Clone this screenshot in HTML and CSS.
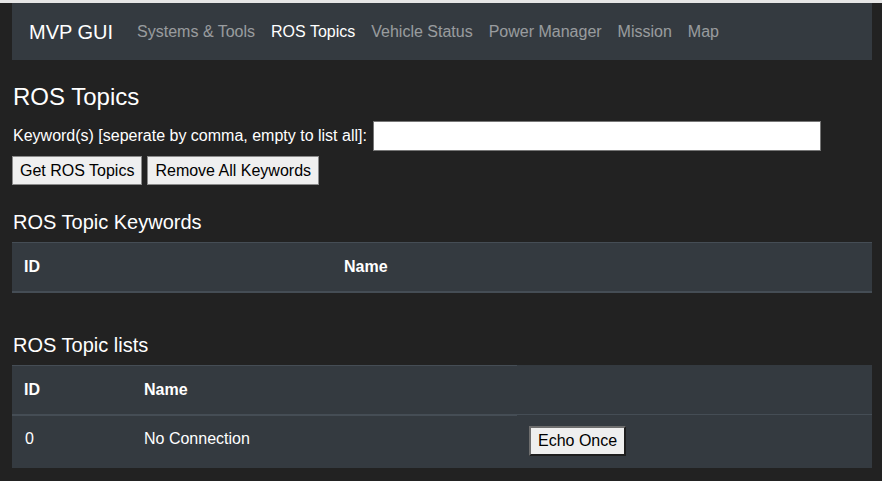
FILE: index.html
```html
<!DOCTYPE html>
<html lang="en">
<head>
<meta charset="utf-8">
<title>MVP GUI - ROS Topics</title>
<link rel="stylesheet" href="styles.css">
</head>
<body>
<div class="topstrip"></div>
<div class="page">
  <nav class="navbar">
    <span class="brand">MVP GUI</span>
    <a class="nav-link">Systems &amp; Tools</a>
    <a class="nav-link active">ROS Topics</a>
    <a class="nav-link">Vehicle Status</a>
    <a class="nav-link">Power Manager</a>
    <a class="nav-link">Mission</a>
    <a class="nav-link">Map</a>
  </nav>

  <h2 class="title">ROS Topics</h2>
  <div class="keyword-row">
    <label class="keyword-label" for="kw">Keyword(s) [seperate by comma, empty to list all]:</label>
    <input class="keyword-input" id="kw" type="text">
  </div>
  <div class="button-row">
    <button class="btn">Get ROS Topics</button>
    <button class="btn">Remove All Keywords</button>
  </div>

  <h3 class="subtitle first">ROS Topic Keywords</h3>
  <table class="table">
    <colgroup><col class="c-kid"><col class="c-kname"></colgroup>
    <thead>
      <tr><th>ID</th><th>Name</th></tr>
    </thead>
    <tbody></tbody>
  </table>

  <h3 class="subtitle second">ROS Topic lists</h3>
  <table class="table">
    <colgroup><col class="c-id"><col class="c-name"><col class="c-act"></colgroup>
    <thead>
      <tr><th>ID</th><th>Name</th></tr>
    </thead>
    <tbody>
      <tr><td class="cell-id">0</td><td>No Connection</td><td><button class="btn echo">Echo Once</button></td></tr>
    </tbody>
  </table>
</div>
</body>
</html>
```

FILE: styles.css
```css
html, body {
  margin: 0;
  padding: 0;
}
body {
  background: #222222;
  color: #ffffff;
  font-family: "Liberation Sans", Arial, sans-serif;
  font-size: 16px;
  line-height: 1.5;
}
.topstrip {
  height: 3px;
  background: #e6e6e6;
}
.page {
  margin-left: 12px;
  width: 860px;
}
.navbar {
  display: flex;
  align-items: center;
  height: 57px;
  box-sizing: border-box;
  padding: 0 16px 0 17px;
  background: #343a40;
}
.brand {
  font-size: 20px;
  line-height: 30px;
  color: #ffffff;
  margin-right: 16px;
}
.nav-link {
  padding: 0 8px;
  color: rgba(255, 255, 255, 0.5);
  line-height: 24px;
}
.nav-link.active {
  color: #ffffff;
}
.title {
  margin: 23px 0 9px 1px;
  font-size: 24px;
  font-weight: 400;
  line-height: 1.2;
}
.keyword-row {
  display: flex;
  align-items: center;
  gap: 6px;
  height: 30px;
  padding-left: 1px;
}
.keyword-input {
  width: 448px;
  height: 30px;
  box-sizing: border-box;
  border: 1px solid #767676;
  background: #ffffff;
  margin: 0;
  padding: 0 4px;
}
.button-row {
  display: flex;
  gap: 5px;
  margin-top: 5px;
}
.btn {
  font-family: "Liberation Sans", Arial, sans-serif;
  font-size: 16px;
  line-height: 19px;
  padding: 4px 7px;
  margin: 0;
  background: #efefef;
  color: #000000;
  border: 1px solid #8a8a8a;
  border-radius: 0;
}
.subtitle {
  font-size: 20px;
  font-weight: 400;
  line-height: 1.2;
  margin: 0 0 8px 1px;
}
.subtitle.first {
  margin-top: 25px;
}
.subtitle.second {
  margin-top: 40px;
}
.table {
  width: 860px;
  border-collapse: collapse;
  table-layout: fixed;
  background: #343a40;
  color: #ffffff;
}
.c-kid { width: 320px; }
.c-kname { width: 540px; }
.c-id { width: 120px; }
.c-name { width: 385px; }
.c-act { width: 355px; }
.table th,
.table td {
  padding: 12px;
  text-align: left;
  vertical-align: top;
  border-top: 1px solid #454d55;
}
.table th {
  font-weight: 700;
  line-height: 24px;
  border-bottom: 2px solid #454d55;
}
.table td {
  line-height: 24px;
  padding-top: 11px;
}
.table td.cell-id {
  padding-left: 13px;
}
.btn.echo {
  line-height: 20px;
  padding: 3px 7px;
  border-width: 2px;
  border-style: solid;
  border-color: #6e6e6e #1e1e1e #1e1e1e #6e6e6e;
}
```
